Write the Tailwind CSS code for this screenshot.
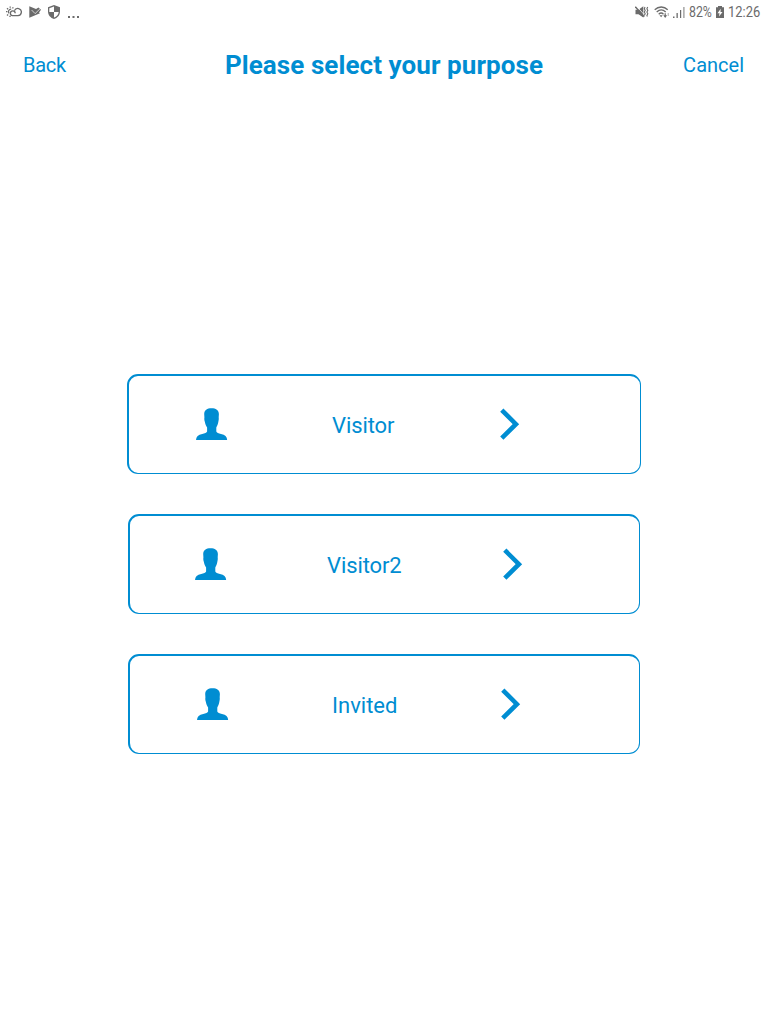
<!DOCTYPE html>
<html lang="en">
<head>
<meta charset="utf-8">
<title>Please select your purpose</title>
<script src="https://cdn.jsdelivr.net/npm/@tailwindcss/browser@4"></script>
</head>
<body class="w-[768px] h-[1024px] overflow-hidden bg-white font-[Roboto,sans-serif] text-[#008dd2]">
<svg class="hidden">
  <symbol id="person" viewBox="0 0 32 32"><path fill="currentColor" d="M15.500 .2C19.800 .2 22.900 2 22.900 6.200C22.900 7.500 22.600 8.500 22.700 9.500C23 11.500 22.500 12.500 22.300 14C22 16 21.100 18.200 20.300 19.500V23.500C20.600 24.800 22.500 25.400 25 25.900C29 26.700 31 28.500 31.200 32H0C.2 28.500 2.200 26.700 6.200 25.900C8.700 25.400 10.800 24.800 11.100 23.500V19.500C10.100 18.200 9.200 16 8.900 14C8.500 12.500 8.100 11.500 8.400 9.500C8.500 8.500 8.200 7.500 8.200 6.200C8.200 2 11.200 .2 15.500 .2Z"/></symbol>
  <symbol id="chevron" viewBox="0 0 20 32"><path fill="none" stroke="currentColor" stroke-width="4.600" d="M1.800 2.200L15.900 16.200L1.800 30.200"/></symbol>
</svg>
<div class="flex h-6 items-center justify-between pl-[6px] pr-[7px] text-[#6b6b6b]">
  <div class="flex h-6 items-center">
    <svg class="h-3 w-4" viewBox="0 0 16 12" fill="none" stroke="currentColor" stroke-width="1.300"><path d="M5.200 3.100A2.600 2.600 0 0 0 3 7.300"/><path d="M9.200 7.200A2.400 2.400 0 1 0 6.500 9.600H12A3.600 3.600 0 1 0 8.500 4.500"/><path d="M4.200 .4v1.400M1 2.200l1.100 1M0 5.700h1.400M1 9.500l1.100-1M4 9.700v1.400M7.300 1.300l-.8 1"/></svg>
    <svg class="ml-[7px] h-3 w-3" viewBox="0 0 12 12"><path fill="currentColor" d="M.3 .3L7 3.100L9.500 1.500L12 3.800L10 6.600L11 7.200L.3 11.800Z"/><path fill="none" stroke="white" stroke-width=".7" d="M2.600 4L6.100 7.600L11 2.800"/></svg>
    <svg class="ml-[7px] h-[14px] w-3" viewBox="0 0 12 14"><path fill="currentColor" d="M6 0L12 2.300V6.500C12 10 9.500 13 6 14C2.500 13 0 10 0 6.500V2.300Z"/><path fill="white" d="M6 1.600V7H1.300V3.300ZM6 7H10.700C10.300 9.800 8.500 11.800 6 12.600Z"/></svg>
    <svg class="ml-[8px] mt-[10px] h-[2px] w-[12px]" viewBox="0 0 12 2" fill="currentColor"><path d="M0 0h2v2H0zM4.500 0h2v2h-2zM9 0h2v2h-2z"/></svg>
  </div>
  <div class="flex h-6 items-center">
    <svg class="h-3 w-[14px]" viewBox="0 0 14 12"><path fill="currentColor" d="M.5 3.700h3L8.300 .3V11.500L3.500 8.300H.5Z"/><path stroke="white" stroke-width=".8" d="M1.600 .3L10 9.600"/><path stroke="currentColor" stroke-width="1.400" d="M.3 .8L9.200 10.800"/><path fill="none" stroke="currentColor" stroke-width="1.100" d="M10 1l-.7 1.700l.9 1.700l-.9 1.700l.9 1.700l-.9 1.700M12.700 1l-.8 1.700l.9 1.700l-.9 1.700l.9 1.700l-.9 1.700l.5 1"/></svg>
    <svg class="ml-[5px] h-3 w-[17px]" viewBox="0 0 17 12" fill="none" stroke="currentColor" stroke-width="1.300"><path d="M.7 3.700C4.500 .1 10 .1 13.700 3.700M2.700 6C5.500 3.400 9 3.400 11.700 6M4.700 8.200C6.300 6.700 8 6.700 9.500 8.200"/><path fill="currentColor" stroke="none" d="M5.500 9.300h3.200L7.100 11.300zM9.300 9.300h3.800l-1.900 2.700z"/><path stroke-width="1.200" d="M11.200 7.300v3"/><path opacity=".4" stroke-width="1.400" d="M14.300 7v3"/></svg>
    <svg class="ml-[2px] h-3 w-3" viewBox="0 0 12 12" fill="currentColor"><path d="M0 10.500h1.500V12H0zM3.500 7h1.300v5H3.500zM7 4h1.200v8H7z"/><path opacity=".75" d="M10.300 1h1.200v11h-1.200z"/></svg>
    <span class="ml-[4px] block w-6 whitespace-nowrap pt-px text-[14.500px] leading-6"><span class="inline-block origin-left scale-x-[.85]">82%</span></span>
    <svg class="ml-[3px] h-3 w-2" viewBox="0 0 8 12"><path fill="currentColor" d="M2 0h4v1.300h2V12H0V1.300h2z"/><path fill="white" d="M4.700 2.800L1.500 7.200h2L3 10.500L6.500 6h-2z"/></svg>
    <span class="ml-[4px] block w-[33px] whitespace-nowrap pt-px text-[14.500px] leading-6"><span class="inline-block origin-left scale-x-[.89]">12:26</span></span>
  </div>
</div>
<header class="flex h-[82px] items-center justify-between px-[22px] text-[20px]">
  <button class="w-[70px] pl-px text-left tracking-[-0.25px]">Back</button>
  <h1 class="whitespace-nowrap text-[26px] font-bold tracking-[0.08px]">Please select your purpose</h1>
  <button class="w-[70px] pr-[2px] text-right">Cancel</button>
</header>
<main class="mt-[268px] flex flex-col items-center gap-10">
  <button class="flex h-[100px] w-[514px] items-center rounded-[11px] border border-t-2 border-l-2 border-[#008dd2] pb-0.5 pl-[67px] text-[22px]">
    <svg class="size-8"><use href="#person"/></svg>
    <span class="ml-[104px] w-[168px] pt-1 text-left tracking-[-0.1px]">Visitor</span>
    <svg class="h-8 w-5"><use href="#chevron"/></svg>
  </button>
  <button class="flex h-[100px] w-[512px] items-center rounded-[11px] border border-t-2 border-l-2 border-[#008dd2] pb-0.5 pl-[65px] text-[22px]">
    <svg class="size-8"><use href="#person"/></svg>
    <span class="ml-[100px] w-[176px] pt-1 text-left tracking-[-0.1px]">Visitor2</span>
    <svg class="h-8 w-5"><use href="#chevron"/></svg>
  </button>
  <button class="flex h-[100px] w-[512px] items-center rounded-[11px] border border-t-2 border-l-2 border-[#008dd2] pb-0.5 pl-[67px] text-[22px]">
    <svg class="size-8"><use href="#person"/></svg>
    <span class="ml-[103px] w-[169px] pt-1 text-left">Invited</span>
    <svg class="h-8 w-5"><use href="#chevron"/></svg>
  </button>
</main>
</body>
</html>
